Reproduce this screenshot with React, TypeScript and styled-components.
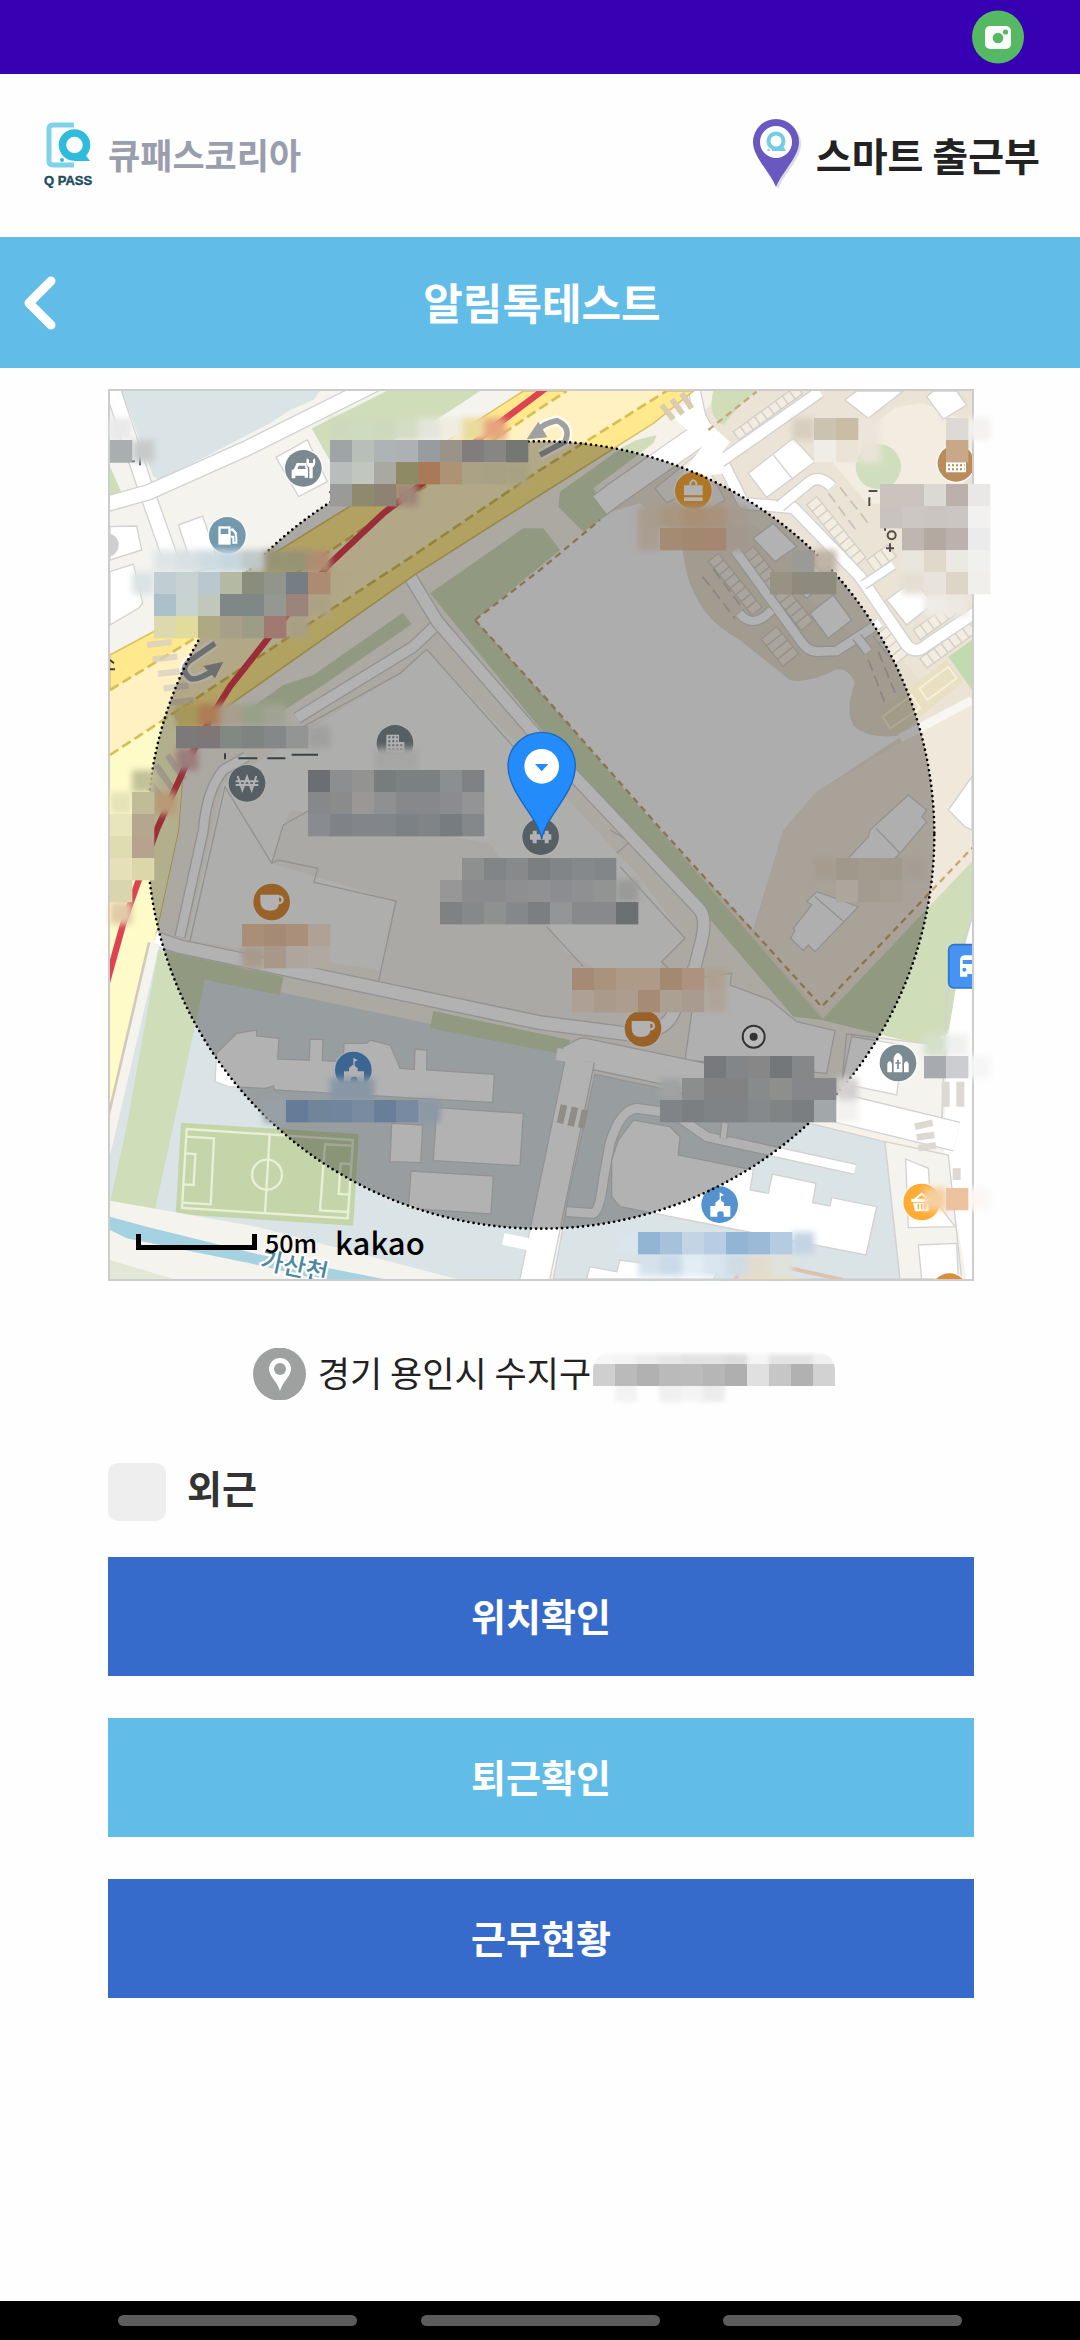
import React, { useState } from "react";
import styled, { createGlobalStyle } from "styled-components";

const GlobalStyle = createGlobalStyle`
  * { box-sizing: border-box; }
  body {
    margin: 0;
    background: #fefefe;
    font-family: "Noto Sans CJK KR", "Noto Sans", sans-serif;
  }
`;

const Page = styled.div`
  min-height: 100vh;
  display: flex;
  flex-direction: column;
`;

const StatusBar = styled.div`
  height: 74px;
  padding: 0 56px;
  display: flex;
  align-items: center;
  justify-content: flex-end;
  background: #3700b3;
`;

const Header = styled.header`
  height: 163px;
  padding: 0 40px 4px 44px;
  display: flex;
  align-items: center;
  justify-content: space-between;
`;

const Brand = styled.div<{ $size: number; $color: string; $gap: number }>`
  display: flex;
  align-items: center;
  gap: ${(p) => p.$gap}px;
  font-size: ${(p) => p.$size}px;
  line-height: 48px;
  font-weight: 700;
  color: ${(p) => p.$color};
`;

const TitleBar = styled.div`
  height: 131px;
  padding: 0 12px 0 16px;
  display: grid;
  grid-template-columns: 48px 1fr 48px;
  align-items: center;
  background: #61bce8;
`;

const BackButton = styled.button`
  display: flex;
  padding: 0;
  border: 0;
  background: none;
  cursor: pointer;
`;

const Title = styled.h1`
  margin: 0;
  padding-bottom: 4px;
  text-align: center;
  font-size: 43px;
  line-height: 60px;
  font-weight: 700;
  color: #fff;
`;

const Main = styled.main`
  flex: 1;
  padding: 21px 106px 40px 108px;
  display: flex;
  flex-direction: column;
`;

const MapFrame = styled.section`
  position: relative;
  border: 2px solid #ccc;
`;

const MapSvg = styled.svg`
  display: block;
  width: 100%;
  height: auto;
  overflow: visible;
`;

const MapLegend = styled.div`
  position: absolute;
  left: 26px;
  bottom: 17px;
  display: flex;
  align-items: center;
  gap: 8px;
  color: #000;
  font-weight: 500;
  line-height: 40px;
`;

const ScaleBar = styled.span`
  width: 121px;
  height: 16px;
  border: 5px solid #000;
  border-top: 0;
`;

const ScaleText = styled.span`
  font-size: 25px;
`;

const Provider = styled.span`
  margin-left: 10px;
  font-size: 31px;
`;

const Address = styled.p`
  margin: 67px 0 0;
  height: 52px;
  display: flex;
  align-items: center;
  justify-content: center;
  font-size: 35px;
  line-height: 52px;
  color: #222;
`;

const AddressText = styled.span`
  margin: 0 2px 0 12px;
  padding-bottom: 4px;
`;

const CheckRow = styled.label`
  margin-top: 63px;
  display: flex;
  align-items: center;
  align-self: flex-start;
  gap: 21px;
  font-size: 38px;
  line-height: 48px;
  font-weight: 700;
  color: #333;
`;

const CheckText = styled.span`
  padding-bottom: 10px;
`;

const CheckBox = styled.input`
  appearance: none;
  margin: 0;
  width: 58px;
  height: 58px;
  border-radius: 10px;
  background: #eee;
  &:checked { background: #61bce8; }
`;

const Actions = styled.div`
  margin-top: 36px;
  display: flex;
  flex-direction: column;
  gap: 42px;
`;

const ActionButton = styled.button<{ $light?: boolean }>`
  height: 119px;
  padding: 0 0 4px;
  border: 0;
  background: ${(p) => (p.$light ? "#61bce8" : "#366bcb")};
  color: #fff;
  font-family: inherit;
  font-size: 38px;
  line-height: 56px;
  font-weight: 700;
  cursor: pointer;
`;

const NavBar = styled.nav`
  height: 39px;
  padding: 0 118px;
  display: flex;
  align-items: center;
  justify-content: space-between;
  background: #000;
`;

const NavPill = styled.button`
  width: 239px;
  height: 11px;
  padding: 0;
  border: 0;
  border-radius: 6px;
  background: #5c5c5c;
`;

/* ---------- mosaic ---------- */

type Row = [number, number, string];

const CELL = 66;

/* Each row: first column, row index, cell colours. */
const MOSAIC: Row[] = [
  [10, 2, "9fa4a7 b8bfb9 aeb3b5 aeb1b4 999c9f 999389 817d7c 878684 757773"],
  [10, 3, "b9bebc c1c6bf a9a8a1 8e8a64 a87a5a ad9374 aba285 a9a183"],
  [10, 4, "9a9a98 8f8a6d 8e8272"],
  [0, 2, "a9afb1"],
  [2, 8, "c0cdd2 c8d2d3 b8c8ce b4b9a4 8a8d7c 92958a 757e83 ab8b72"],
  [2, 9, "abc0ca c8d2cf c0c8bd 7f8886 7f8886 939890 9b857b"],
  [2, 10, "dbd9ad e1db9c aea883 a79f87 9c9c87 a07a70"],
  [3, 15, "7b7979 7e7777 828882 7f8481 858889 939595"],
  [9, 17, "6b6f73 8d8e8f 939391 777c7d 7b8082 7b8082 8b8f91 7e8284"],
  [9, 18, "87888b 8b8b8c 999896 8f9092 86888b 86888b 8a8c8f 929496"],
  [9, 19, "8a8b8f 7f8286 82868a 82868a 7b8184 808487 777c80 85888a"],
  [1, 18, "c0bc98"],
  [0, 19, "e8e5bd b5a68e"],
  [0, 20, "e0dcb2 b5a38d"],
  [0, 21, "e5e0b7 dcd6ab"],
  [0, 22, "d9d5ae"],
  [16, 21, "8e8f8f 828588 87898a 7c7f81 828587 85898b 828688"],
  [15, 22, "979797 8a8b8c 898b8d 8d8f91 8f9193 8b8d90 8e9092 929393"],
  [15, 23, "7f8183 85898a 8f9191 85888a 7b7f82 939597 87898b 87898a 6b7073"],
  [6, 24, "a98e78 a58a75 aa8f7a b0a196"],
  [7, 25, "a89889 aea59c b0a8a1"],
  [21, 26, "a58a76 aa937d ad9a87 af9a88 a38872 ad937f"],
  [21, 27, "ada196 a99a8b ad9d8f a68b77 aca093 a99b8f"],
  [8, 32, "647c98 70859a 70869f 798c9f 697f99 788aa0"],
  [27, 30, "77797c 838688 878788 74777a 858788"],
  [26, 31, "8c8d8d 838282 838282 888b8b 8e8e8c 85878a 85878a"],
  [25, 32, "808487 7b7f82 7f8385 7f8385 86898b 808485 7b7e80 a2a8aa"],
  [24, 38, "93b5d5 a6c1da c3d5e5 b7cde4 93b5d5 9bbad8 b5cbe1"],
  [32, 1, "ccc2b1 c9bda6"],
  [32, 2, "f0ede6 ebe3d6"],
  [38, 1, "dddad5"],
  [38, 2, "c9a88a"],
  [35, 4, "cac3be cac3be dcd9d5 bcb0aa e9e8e7"],
  [35, 5, "c9c3bf cdc7c2 cbc5c1 ccc6c3 f2f1f0"],
  [36, 6, "c0b6b1 b3a9a0 bcb1ac ebebeb"],
  [37, 7, "e0d8cb ebe9e2 f0f0ee"],
  [37, 8, "e8e4dd ddd5c8 f0efec"],
  [25, 6, "a68b74 a38870 a68670"],
  [31, 7, "9b9a96"],
  [30, 8, "989284 8f8a7e 8f8a7e"],
  [33, 21, "a0988a a39b8d a0998c"],
  [33, 22, "aca69d a29b8f a69f94"],
  [37, 30, "a7abb0 cccdd1"],
  [38, 36, "ecc39e"],
];

/* Soft outer cells that fade into the map. */
const FRINGE: Row[] = [
  [10, 1, "cdd9bd cedbc0 cdd9be d3dcc4 e2e5d9 f0ede0 eadb9d e6a57f"],
  [18, 3, "a8a083"],
  [13, 4, "a0867a"],
  [0, 1, "e9e9e9"],
  [1, 2, "c7caca"],
  [2, 7, "dfe5e6 d8e1e4 cedbe1 c7d7df c0c8c8 969473 969375 b18c72"],
  [1, 8, "dbe3e6"],
  [10, 8, "b1a685"],
  [9, 9, "aba184"],
  [8, 10, "a79f84"],
  [3, 14, "a6975a ae7d57 a89e8a 98a08a a0a393"],
  [9, 15, "a0a09f"],
  [3, 16, "9b7d7c"],
  [1, 17, "c3c199"],
  [0, 18, "e6e3b8"],
  [2, 18, "b99a78"],
  [0, 23, "e2caa9"],
  [12, 16, "a6a6a5 a6a6a5"],
  [23, 22, "9a9a99"],
  [6, 25, "a89a8b"],
  [24, 5, "a89c8e a8967f a98f74 a9917a a69a8e"],
  [24, 6, "a99d91"],
  [28, 6, "a3988d"],
  [27, 26, "aea090"],
  [27, 27, "b0a49a"],
  [10, 31, "8797a6 8797a6"],
  [7, 32, "96a0a6"],
  [14, 32, "8b98a6"],
  [25, 31, "a0a2a3"],
  [33, 31, "d3d1cf"],
  [33, 32, "f2f1ef"],
  [24, 39, "d4e1eb c9dae8 e3edf4 d9e5f0 cfdce5 e3dccd e0e2dc"],
  [23, 38, "dae5ec"],
  [31, 38, "c3d4e4"],
  [31, 1, "d8cec0"],
  [34, 1, "ebe5dc"],
  [34, 2, "e9e3d8"],
  [39, 1, "f3f2f1"],
  [36, 7, "eae6de"],
  [36, 8, "e5dfd3"],
  [37, 9, "efece6 ece9e2"],
  [32, 7, "bfb4a6"],
  [32, 21, "a59b8e"],
  [36, 21, "a59d93"],
  [37, 29, "d5dfc9 f0f0ef"],
  [39, 30, "f6f6f6"],
  [37, 36, "f6cf9f"],
  [39, 36, "fcf7f3"],
];

const Cells = ({ rows }: { rows: Row[] }) => (
  <>
    {rows.flatMap(([col, row, colors]) =>
      colors.split(" ").map((c, n) => (
        <rect
          key={`${col}-${row}-${n}`}
          x={60 + (col + n) * CELL}
          y={48 + row * CELL}
          width={CELL + 1}
          height={CELL + 1}
          fill={`#${c}`}
        />
      )),
    )}
  </>
);

/* ---------- map ---------- */

const Road = ({ d, w, fill = "#fff" }: { d: string; w: number; fill?: string }) => (
  <g fill="none" strokeLinejoin="round">
    <path d={d} stroke="#d2d2d2" strokeWidth={w + 8} />
    <path d={d} stroke={fill} strokeWidth={w} />
  </g>
);

const Block = ({ p, fill = "#fff" }: { p: string; fill?: string }) => (
  <polygon points={p} fill={fill} stroke="#d4d2cf" strokeWidth="4" />
);

const Parking = ({ x, y, n, a, w = 26, h = 38 }: { x: number; y: number; n: number; a: number; w?: number; h?: number }) => (
  <g transform={`translate(${x} ${y}) rotate(${a})`} fill="#f3ece0" stroke="#d4cfc8" strokeWidth="4">
    {Array.from({ length: n }, (_, i) => (
      <rect key={i} x={i * w} y="0" width={w} height={h} />
    ))}
  </g>
);

const Crosswalk = ({ x, y, n, a, dx, len = 75 }: { x: number; y: number; n: number; a: number; dx: number; len?: number }) => (
  <g transform={`translate(${x} ${y}) rotate(${a})`} fill="#d8cfc6" opacity="0.75">
    {Array.from({ length: n }, (_, i) => (
      <rect key={i} x={i * dx} y={i * 45} width={len} height="19" />
    ))}
  </g>
);

const Poi = ({ x, y, fill, children }: { x: number; y: number; fill: string; children?: React.ReactNode }) => (
  <g transform={`translate(${x} ${y})`}>
    <circle r="59" fill="#fff" opacity="0.7" />
    <circle r="55" fill={fill} />
    <g fill="#fff">{children}</g>
  </g>
);

const Cup = () => (
  <>
    <path d="M-34-22H22V2Q22 26-6 26Q-34 26-34-2Z" />
    <circle cx="23" cy="-7" r="10" fill="none" stroke="#fff" strokeWidth="7" />
  </>
);

const School = () => (
  <>
    <path d="M-28 36V4H-13V-6L-1-16L13-6V4H32V36H12V26Q12 20 3 20Q-7 20-7 26V36Z" />
    <path d="M0-37L13-29L4-25V-12H0Z" />
  </>
);

const MapDrawing = () => (
  <MapSvg viewBox="60 33 2586 2664" role="img" aria-label="지도">
    <defs>
      <clipPath id="mapClip"><rect x="60" y="33" width="2586" height="2664" /></clipPath>
      <filter id="soft" x="-5%" y="-5%" width="110%" height="110%"><feGaussianBlur stdDeviation="10" /></filter>
    </defs>
    <g clipPath="url(#mapClip)">
      <rect x="60" y="33" width="2586" height="2664" fill="#f4f3ee" />

      {/* north-west blocks */}
      <polygon points="95,33 690,33 670,60 600,90 540,130 210,300 190,290" fill="#dae3e6" />
      <polygon points="890,33 1170,33 1030,125 730,260 665,145" fill="#d0ddb9" />
      <polygon points="60,260 98,345 60,350" fill="#d0ddb9" />
      <Block p="558,232 652,180 712,305 626,350" />
      <Block p="265,435 338,408 390,560 312,575" />
      <Block p="60,440 140,438 155,510 60,540" />
      <Block p="60,575 130,552 158,670 145,685 60,735" />
      <circle cx="50" cy="495" r="36" fill="#cfcfd2" />
      <Road d="M66 20L165 320L250 560" w={42} />
      <Road d="M50 372L175 337L470 205L860 10" w={42} />
      <path d="M160 325L175 350" stroke="#fff" strokeWidth="40" />

      {/* central block */}
      <polygon points="60,1300 390,995 980,580 1800,33 2646,33 2646,2697 60,2697" fill="#f6f2ea" />
      <polygon points="1560,395 1900,33 2646,33 2646,1440 2195,1920 1710,1350" fill="#ebe3d5" />
      <polygon points="2175,1240 2646,960 2646,1450 2200,1910 1990,1660 2080,1350" fill="#f1e8dc" />
      <path d="M1155 720L1560 395L1650 370L1778 480Q1780 610 1850 700Q1880 740 1950 780L2100 900Q2160 910 2240 868Q2280 865 2295 910Q2265 990 2290 1035Q2330 1080 2440 1065L2175 1240L2080 1350L1990 1650L1710 1350Z" fill="#f8f8f8" />
      <path d="M1778 480Q1780 610 1850 700Q1880 740 1950 780L2100 900Q2160 910 2240 868Q2280 865 2295 910Q2265 990 2290 1035Q2330 1080 2440 1065L2530 950L2320 700L2000 440L1850 400Z" fill="#e7dfcf" />

      {/* greens */}
      <polygon points="460,1000 580,915 670,885 938,698 965,733 700,915 560,1005" fill="#d0ddb9" />
      <polygon points="1020,640 1300,445 1360,445 1410,510 1155,720 1350,935 1710,1350 2200,1920 2110,1910 1870,1630 1610,1350 1350,1045" fill="#d0ddb9" />
      <polygon points="1410,335 1600,200 1640,180 1700,165 1690,190 1510,325 1560,400 1480,455 1405,380" fill="#d0ddb9" />
      <polygon points="2195,1920 2660,1430 2646,1620 2575,1960 2500,1995" fill="#d0ddb9" />
      <path d="M1870 33Q1850 110 1900 135Q1960 60 2000 33Z" fill="#d0ddb9" />
      <circle cx="2365" cy="260" r="68" fill="#cfdfbd" />
      <polygon points="2575,830 2646,780 2646,930" fill="#c3d9ae" />

      {/* apartment plots */}
      <polygon points="2230,250 2300,170 2420,80 2500,70 2646,130 2646,280 2560,380 2330,370" fill="#f3ece0" />
      <circle cx="2365" cy="260" r="68" fill="#cfdfbd" />
      <polygon points="2110,620 2220,530 2440,790 2330,800" fill="#ebe3d5" />
      <Block p="1975,280 2110,175 2175,245 2030,352" />
      <path d="M2050 225L2110 300" stroke="#d4d2cf" strokeWidth="4" />
      <Block p="2265,60 2300,33 2440,33 2335,115" />
      <Block p="2510,50 2530,33 2600,33 2630,75 2560,118" />
      <Block p="2390,660 2470,600 2530,670 2450,735" />
      <Block p="1990,475 2050,430 2120,500 2055,545" />
      <Block p="2090,590 2160,540 2215,600 2150,655" />
      <Block p="2160,700 2230,645 2285,720 2215,775" />
      <Block p="1695,325 1830,215 1905,360 1840,400 1780,345 1730,368" fill="#f4f0e8" />
      <Parking x={1930} y={155} n={9} a={-36} h={30} />
      <Parking x={2180} y={350} n={9} a={51} />
      <Parking x={1885} y={520} n={8} a={51} />
      <Parking x={1990} y={500} n={11} a={51} h={46} />
      <Parking x={2060} y={740} n={4} a={51} h={60} />
      <Parking x={2470} y={750} n={6} a={-36} h={36} />
      <Parking x={2490} y={835} n={7} a={-36} h={36} />
      <Parking x={2330} y={540} n={3} a={-36} h={44} />
      <Parking x={2390} y={740} n={4} a={51} h={50} />

      <Road d="M1530 375L1570 345L1850 150" w={66} />
      <Road d="M1810 20L1830 110L1960 370L2110 383L2310 590L2450 795Q2475 825 2510 795L2660 695" w={32} />
      <Road d="M1890 245L2190 35" w={32} />
      <Road d="M2070 378L2160 305Q2190 285 2225 320" w={30} />
      <Road d="M2320 615L2410 555" w={24} />
      <Road d="M1935 510L2130 780Q2150 813 2180 815L2240 813L2370 728" w={26} />
      <Road d="M1948 700Q1990 750 2045 690" w={24} />
      <Road d="M2300 770L2335 815" w={24} />
      <path d="M1770 90L1880 190L1830 260L1900 250" stroke="#fff" strokeWidth="60" fill="none" />
      <path d="M2430 1075L2646 960" stroke="#f8f6f2" strokeWidth="26" />
      <g fill="none" stroke="#c4c0bb" strokeWidth="5" strokeDasharray="34 16">
        <path d="M1838 590L1935 715" /><path d="M1870 568L1962 690" />
        <path d="M2215 340L2300 452" /><path d="M2250 322L2335 430" />
        <path d="M2335 840L2385 970" /><path d="M2365 815L2420 950" />
      </g>
      <polygon points="2365,995 2570,840 2620,905 2420,1065" fill="#e9dfc2" />
      <g fill="none" stroke="#f6efd9" strokeWidth="6">
        <polygon points="2378,1010 2465,945 2490,985 2400,1045" />
        <polygon points="2488,925 2575,860 2600,895 2512,960" />
      </g>
      <Block p="2455,1245 2510,1290 2495,1310 2510,1325 2430,1420 2370,1480 2275,1435 2335,1370 2340,1350" fill="#fbfbfb" />
      <Block p="2180,1535 2305,1580 2175,1715 2155,1695 2140,1712 2102,1675 2115,1650 2110,1645 2165,1575 2150,1565" fill="#fbfbfb" />
      <path d="M2358 1345L2430 1420M2175 1550L2258 1622" stroke="#d4d2cf" strokeWidth="4" />
      <Block p="2575,1290 2646,1190 2646,1350 2625,1340" />

      {/* office block in the centre */}
      <polygon points="400,1210 930,880 1010,808 1370,1190 1640,1480 1785,1675 1715,1745 1690,1860 1250,1830 290,1680" fill="#faf9f6" />
      <polygon points="600,1290 1200,1390 1430,1720 1690,1860 1450,1930 870,1800 918,1563 545,1450" fill="#f4f2ec" />
      <g fill="none" stroke="#d2d1ce" strokeWidth="4">
        <polygon points="545,1450 565,1440 683,1465 672,1507 918,1563 860,1830 295,1705 405,1220" />
        <path d="M640 1040L930 880L1010 808L1270 1100" />
        <path d="M545 1450L580 1335L660 1290" />
        <path d="M1590 1460L1785 1675L1715 1745L1760 1790M1370 1640L1480 1760" />
        <path d="M1560 1350L1620 1385L1580 1420M1480 1200L1600 1330" />
      </g>
      <Road d="M470 1130L400 1170Q350 1230 340 1350L270 1670" w={26} />
      <Road d="M620 1015L970 800L1042 732" w={30} />
      <Road d="M960 590L1042 725L1350 1080L1605 1350L1830 1590Q1850 1620 1835 1680L1815 1760L1750 1900Q1720 1960 1650 1950" w={34} />

      {/* arterial road */}
      <path d="M60 825L190 755L520 540L770 385L1150 130L1300 33H1810L1690 130L1350 345L980 580L390 995L300 1100L280 1150L265 1350L200 1650L60 2250Z" fill="#ffe98c" stroke="#d9c468" strokeWidth="5" />
      <path d="M60 930L290 790L740 500L1350 85L1430 33H1730L1350 270L980 520L530 815L250 1000L60 1125Z" fill="#fff1c2" />
      <path d="M60 1125L250 1000L300 1100L280 1150L265 1350L200 1650L60 2250Z" fill="#fffbc9" />
      <g fill="none" stroke="#d5bf57" strokeWidth="8" strokeDasharray="30 14">
        <path d="M60 930L290 790L740 500L1350 85L1430 33" />
        <path d="M60 1125L250 1000L530 815L980 520L1350 270L1730 33" />
      </g>
      <Crosswalk x={170} y={785} n={6} a={-6} dx={12} />
      <Crosswalk x={240} y={1120} n={3} a={55} dx={6} len={90} />
      <g stroke="#d8cdb0" strokeWidth="17"><path d="M1715 75L1750 118M1745 58L1778 102M1775 40L1805 85" /></g>
      <path d="M50 1810L100 1630L200 1350L290 1150L370 1000L420 920L530 780L720 550L880 400L1010 300L1220 135L1380 15" fill="none" stroke="#dd4350" strokeWidth="19" />
      <g fill="none" stroke="#fff" strokeWidth="32" opacity="0.7">
        <path d="M375 790L295 845Q270 870 300 895Q320 905 380 865" />
        <path d="M1350 225L1425 185Q1445 140 1400 122Q1360 130 1345 150" />
      </g>
      <g fill="none" stroke="#a0a0a0" strokeWidth="17">
        <path d="M375 790L295 845Q270 870 300 895Q320 905 380 865" />
        <path d="M1350 225L1425 185Q1445 140 1400 122Q1360 130 1345 150" />
      </g>
      <path d="M400 845L340 858L375 895Z M1310 178L1345 125L1372 172Z" fill="#a0a0a0" />

      {/* school grounds */}
      <polygon points="205,1660 60,2250 60,2697 1300,2697 1440,2020 350,1790" fill="#dae3e6" />
      <Road d="M195 1675L270 1700L870 1827L1350 1928L1640 1965" w={38} />
      <path d="M190 1690L40 2330" stroke="#d2c9bb" strokeWidth="34" fill="none" />
      <path d="M195 1690L45 2330" stroke="#f4f3ee" strokeWidth="28" fill="none" />
      <polygon points="205,1710 580,1790 570,1845 345,1800 195,2490 60,2465 110,2240" fill="#d0ddb9" />
      <polygon points="1030,1893 1440,1980 1430,2025 1020,1945" fill="#d0ddb9" />
      <Block p="380,2020 440,1960 500,1950 500,1968 567,1975 563,2037 658,2040 660,1977 699,1979 697,2042 760,2045 762,1990 830,1990 840,1980 900,1995 920,2040 930,2065 973,2068 975,2007 1011,2010 1010,2070 1213,2083 1208,2167 1035,2158 900,2150 555,2130 550,2118 525,2125 415,2120 375,2105" />
      <Block p="1040,2183 1300,2200 1290,2357 1030,2342" />
      <Block p="963,2373 1210,2388 1203,2502 955,2485" />
      <Block p="905,2230 998,2235 992,2348 900,2345" />
      <polygon points="273,2228 806,2262 790,2537 257,2502" fill="#c4d6a9" />
      <g fill="none" stroke="#e8f0d8" strokeWidth="7">
        <polygon points="290,2247 789,2280 773,2515 276,2484" />
        <path d="M539 2264L525 2500M288 2270L372 2275L362 2473L278 2468M286 2320L316 2322L311 2415L282 2413M785 2297L705 2293L690 2491L773 2496M780 2352L752 2350L746 2442L776 2444" />
        <circle cx="531" cy="2384" r="45" />
      </g>
      <polygon points="60,2462 500,2540 1100,2697 60,2697" fill="#f4f3ee" />
      <polygon points="60,2510 170,2540 500,2622 880,2697 680,2697 480,2650 110,2575 60,2550" fill="#a5d2e0" />
      <polygon points="60,2640 250,2697 60,2697" fill="#e3e8d6" />

      {/* south-east */}
      <Block p="1820,1795 1925,1780 1920,1815 2040,1860 2120,1925 2235,1952 2210,2080 1785,2040" fill="#fdfdfd" />
      <Block p="2270,1962 2500,1990 2560,1995 2646,2240 2555,2235 2250,2165" fill="#f4f3ee" />
      <Block p="2285,1970 2440,1995 2420,2145 2255,2110" />
      <polygon points="2575,1960 2610,1750 2646,1620 2646,2697 2630,2697 2560,2300" fill="#fff" />
      <path d="M2646 1610L2570 1850L2555 2235" fill="none" stroke="#d2d2d2" strokeWidth="5" />
      <Road d="M1440 2040L1480 2018L1800 2085L2250 2185L2600 2270" w={84} />
      <Road d="M1470 2040L1330 2720" w={84} />
      <path d="M1470 2020L1460 2100M1400 2022L1480 2035M1240 2577L1350 2600" stroke="#fff" strokeWidth="36" />
      <polygon points="1515,2083 1830,2150 2385,2285 2430,2697 1390,2697 1425,2510 1435,2450" fill="#dae3e6" stroke="#d2d2d2" strokeWidth="4" />
      <polygon points="2385,2285 2575,2325 2615,2697 2430,2697" fill="#f4f3ee" stroke="#d2d2d2" strokeWidth="4" />
      <Road d="M1430 2495L1510 2500Q1530 2490 1540 2400L1560 2290Q1590 2190 1640 2185L1750 2200L1850 2270L2295 2368" w={26} />
      <Road d="M1900 2275L1905 2230" w={16} />
      <Block p="1630,2220 1740,2240 1770,2270 1765,2325 1990,2370 1980,2430 2035,2440 2047,2382 2178,2410 2168,2468 2220,2478 2225,2453 2360,2480 2328,2625 1590,2480 1565,2450 1565,2340 1585,2280" />
      <Block p="1490,2697 1500,2660 1580,2675 1590,2640 1880,2680 1870,2697" />
      <polygon points="1960,2670 2150,2697 1950,2697" fill="#ecdcb8" />
      <path d="M2080 2660L2260 2700M1950 2670L1935 2700" stroke="#dcc3b0" strokeWidth="12" />
      <Block p="2447,2337 2515,2365 2520,2440 2595,2540 2455,2543" />
      <Block p="2485,2595 2600,2590 2605,2697 2495,2697" />
      <g stroke="#ddd8d2" strokeWidth="20">
        <path d="M2475 2240L2528 2228M2480 2272L2533 2265M2485 2305L2538 2296" />
        <path d="M2567 2105V2180M2611 2105V2180M2600 2365V2400" strokeWidth="24" />
        <path d="M1422 2175L1410 2230M1455 2182L1442 2238M1485 2190L1474 2244" stroke="#cfc9c0" />
      </g>

      <g fill="none" stroke="#c9a774" strokeWidth="7" strokeDasharray="20 14">
        <path d="M1155 720L1350 570L1530 420M1155 720L1350 935L1715 1350L2195 1880L2650 1400" />
        <path d="M1855 150L2000 35" />
      </g>

      {/* places */}
      <Poi x={640} y={265} fill="#7b8a90">
        <path d="M-35 30V6L-28 2L-20-16H8L14 2V28H4V22H-24V30Z" />
        <path d="M-14-8H4L7 2H-18Z" fill="#7b8a90" />
        <path d="M11-30Q4-12 18-2V30H28V-2Q40-12 34-30L29-26V-16H17V-26Z" />
      </Poi>
      <Poi x={412} y={466} fill="#7399ad">
        <path d="M-27-27H10V28H-27Z" /><path d="M-20-20H3V-4H-20Z" fill="#7399ad" />
        <path d="M10-18Q26-14 27 8V22H18V4H10M14-20L28-4" fill="none" stroke="#fff" strokeWidth="6" />
      </Poi>
      <Poi x={915} y={1090} fill="#7b8a90">
        <path d="M-26-26H12V-4H28V28H-26Z" />
        <g stroke="#7b8a90" strokeWidth="6" strokeDasharray="6 6"><path d="M-20-18H8M-20-6H8M-20 6H24M-20 18H24" /></g>
      </Poi>
      <Poi x={471} y={1210} fill="#7b8a90">
        <path d="M-28-22L-14 20L0-20L14 20L28-22M-34-6H34M-34 5H34" fill="none" stroke="#fff" strokeWidth="6" />
      </Poi>
      <Poi x={1352} y={1370} fill="#7b8a90"><path d="M-32-7H32V9H-32ZM-24-18H-12V20H-24ZM12-18H24V20H12Z" /></Poi>
      <Poi x={545} y={1566} fill="#da8d3a"><Cup /></Poi>
      <Poi x={1659} y={1945} fill="#da8d3a"><Cup /></Poi>
      <Poi x={790} y={2070} fill="#5592d0"><School /></Poi>
      <Poi x={1889} y={2474} fill="#5592d0"><School /></Poi>
      <Poi x={1810} y={332} fill="#fba935">
        <path d="M-28-16H28V14H-28ZM-28 20H28V31H-28Z" />
        <path d="M-9-16V-24Q0-38 9-24V-16" fill="none" stroke="#fff" strokeWidth="6" />
      </Poi>
      <Poi x={2598} y={250} fill="#b98c5c">
        <path d="M-30 27V-14L-14-22L-10-15L2-24L8-14H30V27Z" />
        <g stroke="#b98c5c" strokeWidth="6" strokeDasharray="6 6"><path d="M-24-6H26M-24 6H26M-24 18H26" /></g>
      </Poi>
      <Poi x={2424} y={2049} fill="#7b8a90">
        <path d="M-13 28V-16Q0-44 13-16V28ZM-32 28V2Q-25-12-18 2V28ZM18 28V2Q25-12 32 2V28Z" />
        <path d="M0-10V18M-8 0H8" stroke="#7b8a90" strokeWidth="5" />
      </Poi>
      <Poi x={2495} y={2466} fill="#ffac35">
        <path d="M-31-10H31V0H-31ZM-26 2H26L20 28H-20Z" />
        <path d="M-20-8L0-25L20-8" fill="none" stroke="#fff" strokeWidth="6" />
        <path d="M-10 6V22M0 6V22M10 6V22" stroke="#ffac35" strokeWidth="4" />
      </Poi>
      <Poi x={2578} y={2735} fill="#da8d3a" />
      <rect x="2576" y="1694" width="120" height="130" rx="16" fill="#4693f2" stroke="#2d74ce" strokeWidth="5" />
      <path d="M2610 1790V1742Q2610 1726 2626 1726H2660V1782H2632V1790Z" fill="#fff" />
      <path d="M2618 1740H2660V1752H2618Z" fill="#4693f2" />
      <circle cx="2623" cy="1769" r="6" fill="#4693f2" />
      <text x="508" y="2664" transform="rotate(12 508 2664)" fontSize="74" fontWeight="500" fill="#4b87a0" stroke="#fff" strokeWidth="14" paintOrder="stroke" strokeLinejoin="round">가산천</text>

      {/* allowed radius */}
      <circle cx="1352" cy="1365" r="1181" fill="#000" fillOpacity="0.3" />
      <circle cx="1352" cy="1365" r="1181" fill="none" stroke="#000" strokeWidth="8" strokeLinecap="round" strokeDasharray="0 15.7" />
      <circle cx="1991" cy="1970" r="33" fill="#b9b9b9" stroke="#333" strokeWidth="6" />
      <circle cx="1991" cy="1970" r="12" fill="#333" />
      <g fill="none" stroke="#3b4046" strokeWidth="6">
        <path d="M60 244H135M150 205V256M60 840L72 850M60 868H75" />
        <path d="M930 346H966M605 1124H684M445 1135H502M405 1120V1138M532 1135H586M735 215V248M740 285V320L718 338" />
        <path d="M2336 333H2362M2338 352V378M2385 440V452M2400 490V515M2388 505H2412" stroke="#574a45" />
        <circle cx="2405" cy="466" r="12" stroke="#574a45" />
      </g>
    </g>

    <g filter="url(#soft)"><Cells rows={FRINGE} /></g>
    <Cells rows={MOSAIC} />

    {/* current position */}
    <path d="M1355 1378C1345 1310 1254 1240 1254 1158A101 101 0 0 1 1456 1158C1456 1240 1365 1310 1355 1378Z" fill="#248bfb" stroke="#1668c4" strokeWidth="4" />
    <circle cx="1355" cy="1159" r="52" fill="#fff" />
    <path d="M1335 1152H1375L1355 1174Z" fill="#248bfb" />
  </MapSvg>
);

/* ---------- logos and icons ---------- */

const CameraBadge = () => (
  <svg width="52" height="54" viewBox="0 0 52 54" aria-hidden="true">
    <ellipse cx="26" cy="27" rx="26" ry="26.5" fill="#55b963" />
    <rect x="13" y="16" width="26" height="23" rx="5" fill="#fafafa" />
    <circle cx="26" cy="28" r="5.3" fill="#55b963" />
    <circle cx="33.500" cy="22" r="2.600" fill="#55b963" />
  </svg>
);

const QPassLogo = () => (
  <svg width="50" height="68" viewBox="0 0 50 68" aria-hidden="true">
    <path d="M30 5H9Q5 5 5 9V41Q5 45 9 45H30" fill="none" stroke="#7fd3e8" strokeWidth="5" />
    <circle cx="30.500" cy="25" r="12" fill="#fff" stroke="#2fbcdc" strokeWidth="7.500" />
    <path d="M34 36L40 33L46 41H30Z" fill="#2fbcdc" />
    <circle cx="18" cy="40" r="2" fill="#2fbcdc" />
    <text x="0" y="65" fontFamily="Liberation Sans, Arial, sans-serif" fontSize="13" fontWeight="700" fill="#1f4a63" stroke="#1f4a63" strokeWidth="0.400">Q PASS</text>
  </svg>
);

const PinLogo = () => (
  <svg width="50" height="74" viewBox="0 0 50 74" aria-hidden="true">
    <path d="M26 72C20 57 3 42 3 27A23 23 0 0 1 49 27C49 42 32 57 26 72Z" fill="#bbb" opacity="0.500" />
    <path d="M24 70C18 55 1 40 1 25A23 23 0 0 1 47 25C47 40 30 55 24 70Z" fill="#6a58c2" />
    <circle cx="24" cy="25" r="16" fill="#fff" />
    <circle cx="24" cy="24" r="7.500" fill="none" stroke="#74cce1" strokeWidth="4" />
    <path d="M20 31H29L31 29L34 34H20Z" fill="#74cce1" />
    <circle cx="16.500" cy="33" r="1.200" fill="#74cce1" />
  </svg>
);

const AddressIcon = () => (
  <svg width="53" height="52" viewBox="0 0 53 52" aria-hidden="true">
    <circle cx="26.500" cy="26" r="26.500" fill="#9fa1a0" />
    <path d="M27 43C24 33 16 28 16 21A11 11 0 0 1 38 21C38 28 30 33 27 43Z" fill="#fff" />
    <circle cx="27" cy="21" r="6" fill="#9fa1a0" />
  </svg>
);

const STREET_CELLS = ["cfcfcf", "bababa", "b1b1b1", "bababa", "bbbbbb", "b6b6b6", "afafaf", "e0e0e0", "c6c6c6", "b1b1b1", "d2d2d2"];
const STREET_TOP = ["f6f6f6", "f3f3f3", "ededed", "e6e6e6", "e2e2e2", "e2e2e2", "dddddd", "f4f4f4", "e3e3e3", "e3e3e3", "f0f0f0"];
const STREET_LOW = ["fefefe", "f3f3f3", "fefefe", "f0f0f0", "f4f4f4", "ececec"];

const StreetSvg = styled.svg`
  overflow: visible;
`;

const HiddenStreet = () => (
  <StreetSvg width="236" height="52" viewBox="0 0 236 52" aria-hidden="true">
    <defs>
      <clipPath id="streetClip"><rect width="242" height="60" rx="18" y="4" /></clipPath>
      <filter id="streetSoft"><feGaussianBlur stdDeviation="2" /></filter>
    </defs>
    <g clipPath="url(#streetClip)">
      <g filter="url(#streetSoft)">
        {STREET_TOP.map((c, i) => <rect key={i} x={i * 22} y="6" width="22" height="14" fill={`#${c}`} />)}
        {STREET_LOW.map((c, i) => <rect key={i} x={i * 22} y="34" width="22" height="20" fill={`#${c}`} />)}
      </g>
      {STREET_CELLS.map((c, i) => <rect key={i} x={i * 22} y="16" width="22" height="22" fill={`#${c}`} />)}
    </g>
  </StreetSvg>
);

export default function App() {
  const [outside, setOutside] = useState(false);
  return (
    <Page>
      <GlobalStyle />
      <StatusBar><CameraBadge /></StatusBar>
      <Header>
        <Brand $size={35} $color="#9a9dab" $gap={14}><QPassLogo />큐패스코리아</Brand>
        <Brand $size={39} $color="#222" $gap={14}><PinLogo />스마트 출근부</Brand>
      </Header>
      <TitleBar>
        <BackButton aria-label="뒤로">
          <svg width="48" height="60" viewBox="0 0 48 60" aria-hidden="true">
            <path d="M35 8L13 30L35 52" fill="none" stroke="#fff" strokeWidth="9" strokeLinecap="round" strokeLinejoin="round" />
          </svg>
        </BackButton>
        <Title>알림톡테스트</Title>
      </TitleBar>
      <Main>
        <MapFrame>
          <MapDrawing />
          <MapLegend>
            <ScaleBar />
            <ScaleText>50m</ScaleText>
            <Provider>kakao</Provider>
          </MapLegend>
        </MapFrame>
        <Address>
          <AddressIcon />
          <AddressText>경기 용인시 수지구</AddressText>
          <HiddenStreet />
        </Address>
        <CheckRow>
          <CheckBox type="checkbox" checked={outside} onChange={(e) => setOutside(e.target.checked)} />
          <CheckText>외근</CheckText>
        </CheckRow>
        <Actions>
          <ActionButton>위치확인</ActionButton>
          <ActionButton $light>퇴근확인</ActionButton>
          <ActionButton>근무현황</ActionButton>
        </Actions>
      </Main>
      <NavBar>
        <NavPill aria-label="최근 앱" />
        <NavPill aria-label="홈" />
        <NavPill aria-label="뒤로 가기" />
      </NavBar>
    </Page>
  );
}
